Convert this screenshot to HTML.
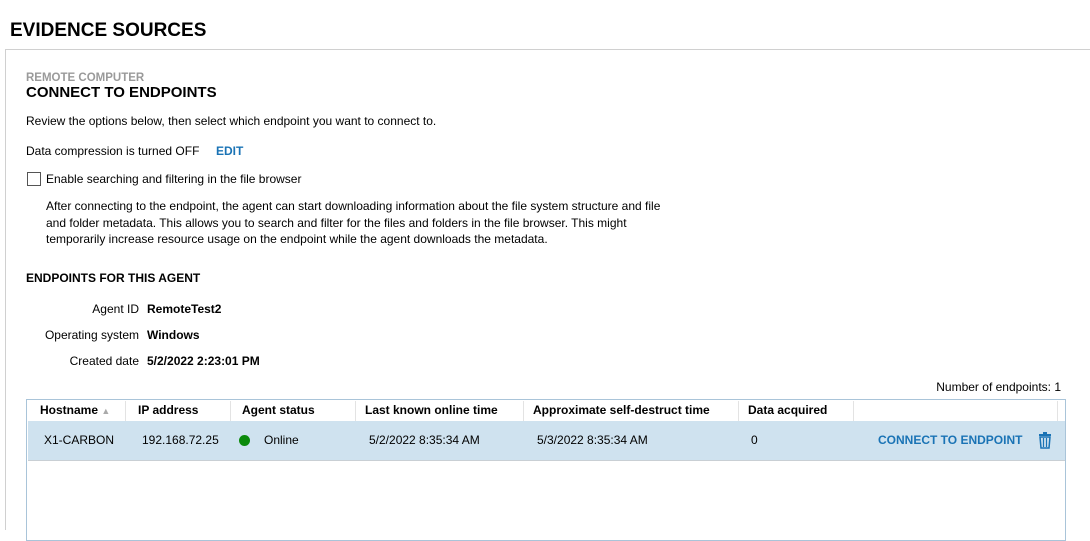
<!DOCTYPE html>
<html><head><style>
body{margin:0;width:1090px;height:525px;overflow:hidden;background:#fff;font-family:"Liberation Sans",sans-serif;color:#000;position:relative;font-size:12px}
.a{position:absolute;white-space:nowrap}
.b{font-weight:bold}
.th{position:absolute;top:0;height:21px;line-height:21px;font-weight:bold;font-size:12px}
.sep{position:absolute;top:1px;width:1px;height:20px;background:#e3e3e3}
.td{position:absolute;line-height:39px;top:0}
</style></head><body>
<div class="a b" style="left:10px;top:20px;font-size:19px">EVIDENCE SOURCES</div>
<div style="position:absolute;left:5px;top:49px;width:1090px;height:480px;border-left:1px solid #d0d0d0;border-top:1px solid #d0d0d0"></div>
<div class="a b" style="left:26px;top:72px;font-size:11.5px;color:#9a9a9a">REMOTE COMPUTER</div>
<div class="a b" style="left:26px;top:84px;font-size:15px">CONNECT TO ENDPOINTS</div>
<div class="a" style="left:26px;top:114px">Review the options below, then select which endpoint you want to connect to.</div>
<div class="a" style="left:26px;top:144px">Data compression is turned OFF</div>
<div class="a b" style="left:216px;top:144px;color:#1a73b5">EDIT</div>
<div style="position:absolute;left:27px;top:172px;width:12px;height:12px;border:1px solid #555"></div>
<div class="a" style="left:46px;top:172px">Enable searching and filtering in the file browser</div>
<div class="a" style="left:46px;top:198px;line-height:16.5px">After connecting to the endpoint, the agent can start downloading information about the file system structure and file<br>and folder metadata. This allows you to search and filter for the files and folders in the file browser. This might<br>temporarily increase resource usage on the endpoint while the agent downloads the metadata.</div>
<div class="a b" style="left:26px;top:271px">ENDPOINTS FOR THIS AGENT</div>
<div class="a" style="right:951px;top:302px">Agent ID</div><div class="a b" style="left:147px;top:302px">RemoteTest2</div>
<div class="a" style="right:951px;top:328px">Operating system</div><div class="a b" style="left:147px;top:328px">Windows</div>
<div class="a" style="right:951px;top:354px">Created date</div><div class="a b" style="left:147px;top:354px">5/2/2022 2:23:01 PM</div>
<div class="a" style="right:29px;top:380px">Number of endpoints: 1</div>
<div style="position:absolute;left:26px;top:399px;width:1038px;height:140px;border:1px solid #a9c4d9;">
 <div style="position:absolute;left:0;top:0;width:100%;height:21px">
  <div class="th" style="left:13px">Hostname <span style="color:#aaa;font-size:9px">▲</span></div>
  <div class="sep" style="left:98px"></div>
  <div class="th" style="left:111px">IP address</div>
  <div class="sep" style="left:203px"></div>
  <div class="th" style="left:215px">Agent status</div>
  <div class="sep" style="left:328px"></div>
  <div class="th" style="left:338px">Last known online time</div>
  <div class="sep" style="left:496px"></div>
  <div class="th" style="left:506px">Approximate self-destruct time</div>
  <div class="sep" style="left:711px"></div>
  <div class="th" style="left:721px">Data acquired</div>
  <div class="sep" style="left:826px"></div>
  <div class="sep" style="left:1030px"></div>
 </div>
 <div style="position:absolute;left:1px;top:21px;width:1037px;height:39px;background:#cfe2ef;border-bottom:1px solid #c9cfd4">
  <div class="td" style="left:16px">X1-CARBON</div>
  <div class="td" style="left:114px">192.168.72.25</div>
  <div style="position:absolute;left:211px;top:14px;width:11px;height:11px;border-radius:50%;background:#0b8a0b"></div>
  <div class="td" style="left:236px">Online</div>
  <div class="td" style="left:341px">5/2/2022 8:35:34 AM</div>
  <div class="td" style="left:509px">5/3/2022 8:35:34 AM</div>
  <div class="td" style="left:723px">0</div>
  <div class="td b" style="left:850px;color:#1a73b5">CONNECT TO ENDPOINT</div>
  <svg style="position:absolute;left:1010px;top:11px" width="14" height="17" viewBox="0 0 14 17"><rect x="1" y="2" width="12" height="2" fill="#1a73b5"/><rect x="5" y="0" width="4" height="2" fill="#1a73b5"/><path d="M2 5h10l-1 11H3z" fill="none" stroke="#1a73b5" stroke-width="1.5"/><path d="M5.5 6v9M8.5 6v9" stroke="#1a73b5" stroke-width="1.2"/></svg>
 </div>
</div>
</body></html>
